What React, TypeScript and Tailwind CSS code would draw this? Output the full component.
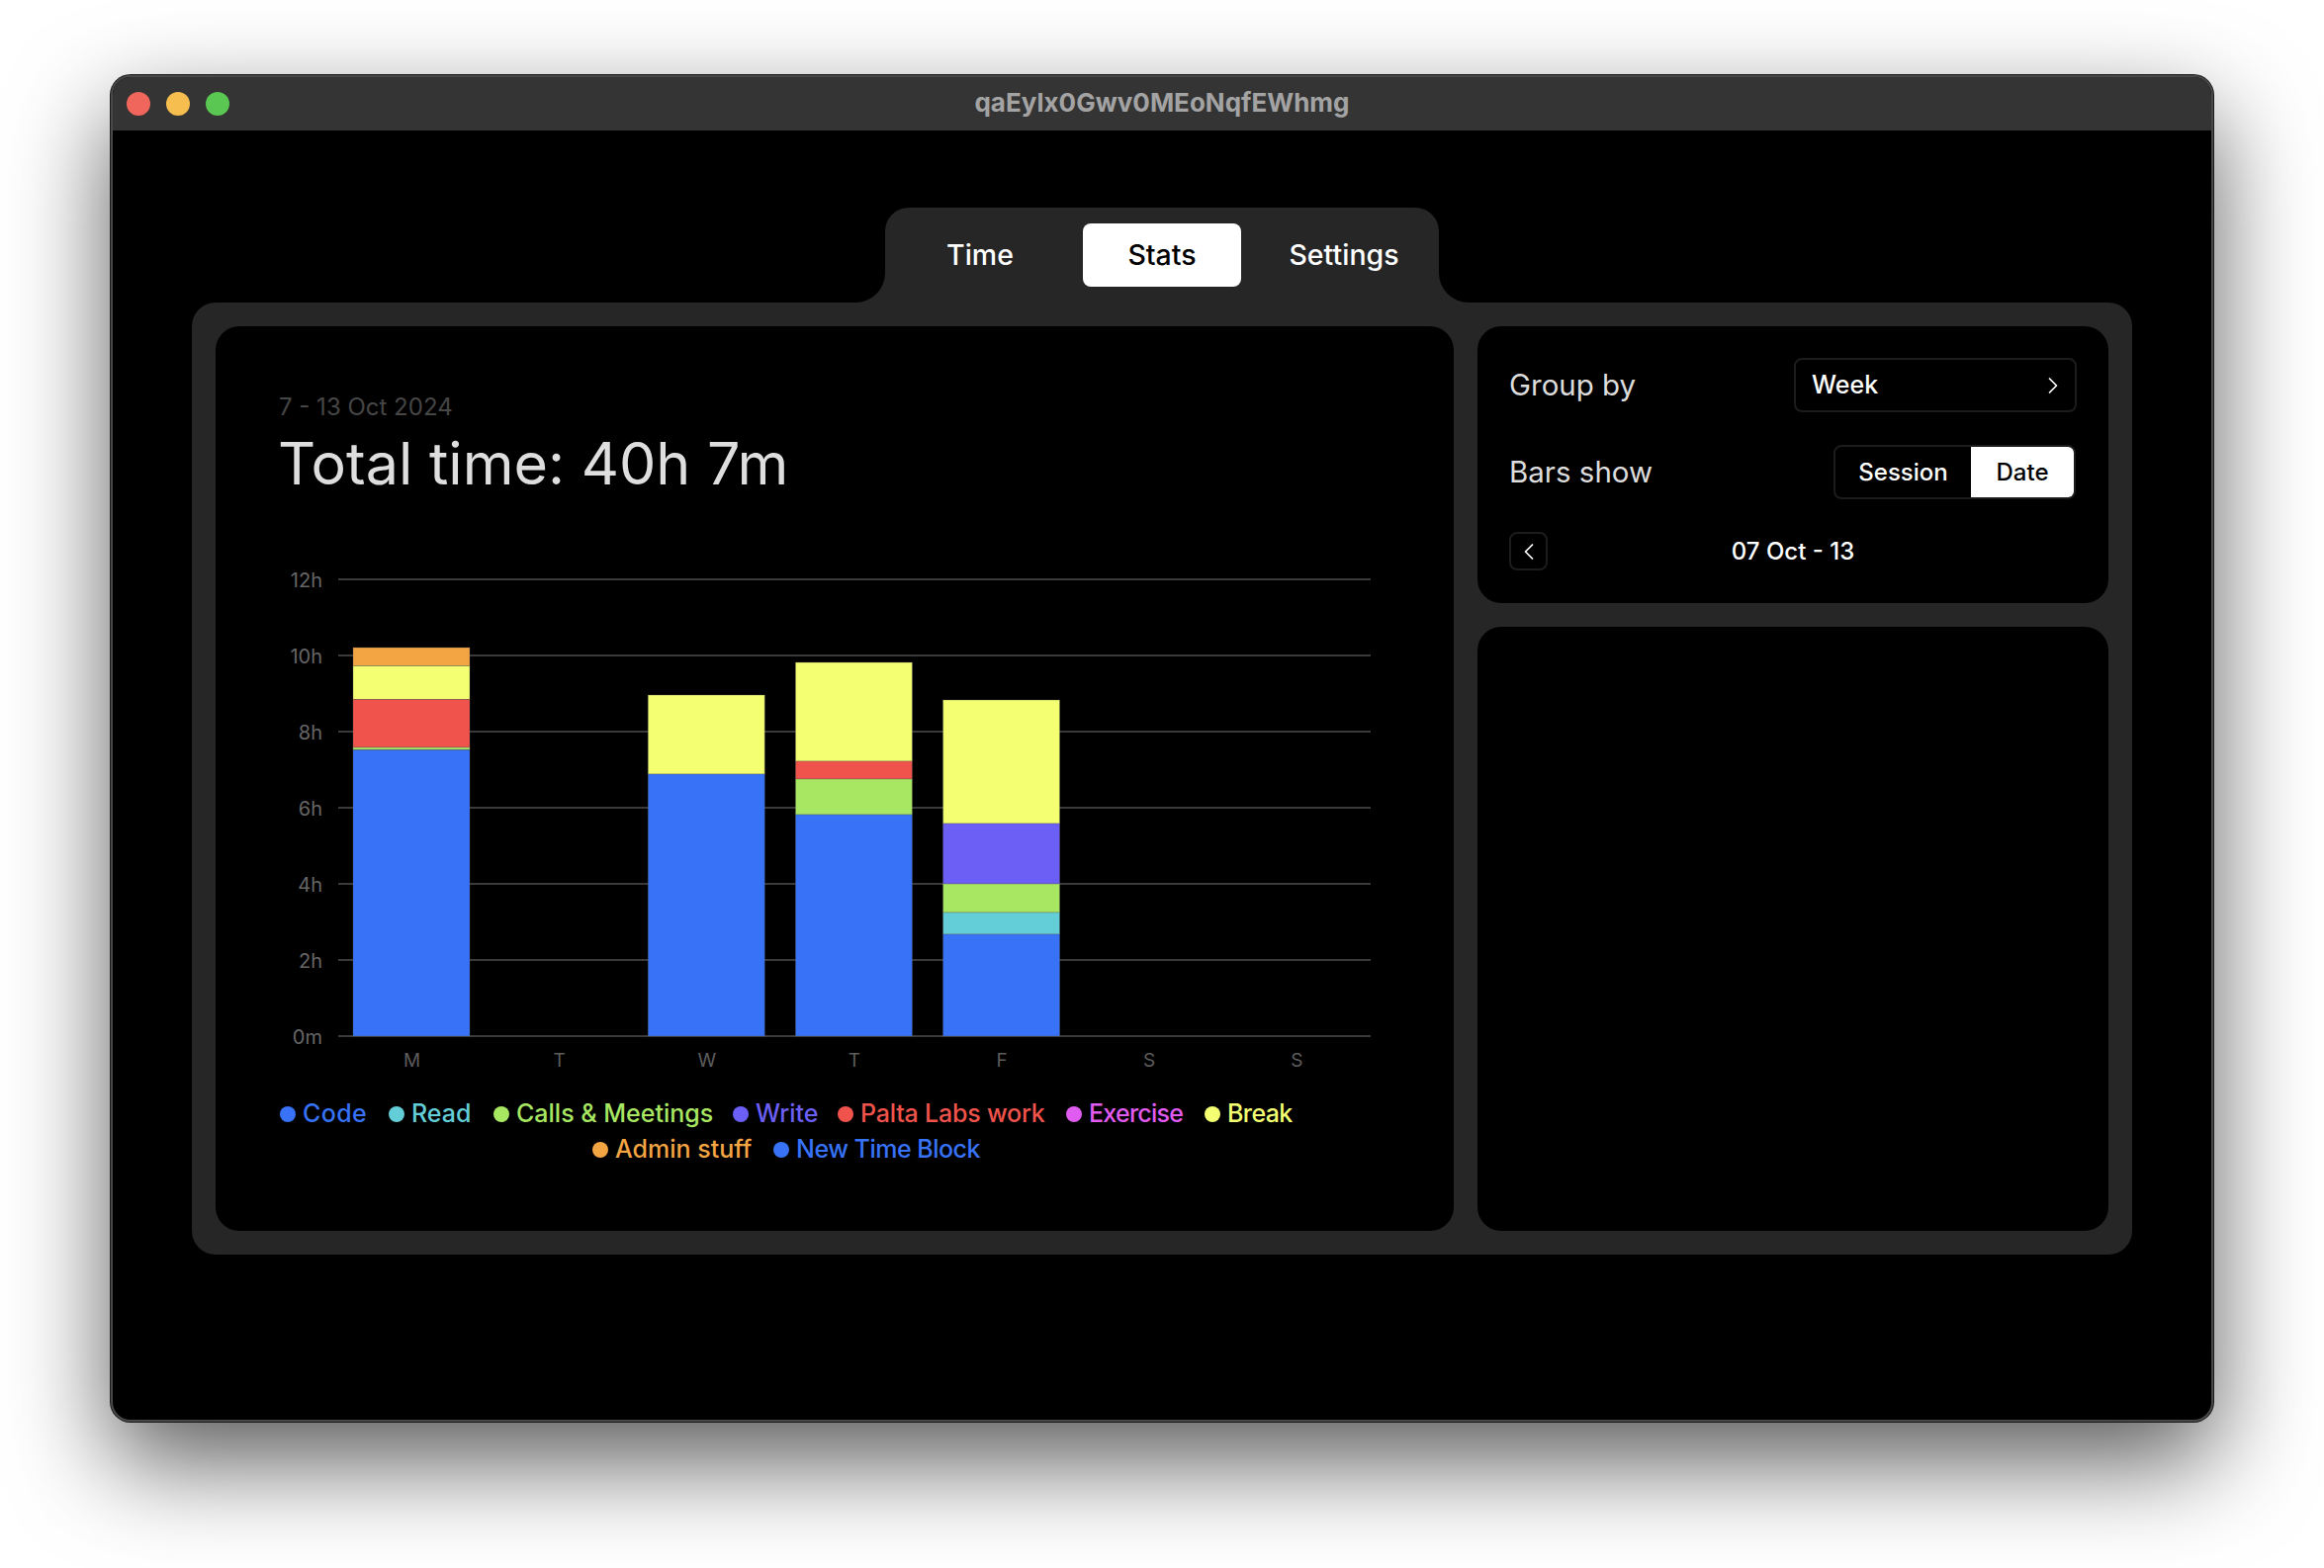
import React from "react";
import { ChevronLeft, ChevronRight } from "lucide-react";

const BLUE = "#3772f7";
const CYAN = "#63ced8";
const GREEN = "#a8e762";
const PURPLE = "#6b5ff6";
const RED = "#ef534b";
const YELLOW = "#f4ff72";
const ORANGE = "#f3a443";

const LEFT = 342;
const COL = 149.14;
const TOP = 570;
const ORIGIN = 283;

type Seg = [number, number, string];
const bars: { day: number; segs: Seg[] }[] = [
  { day: 0, segs: [[655, 673.5, ORANGE], [673.5, 707.5, YELLOW], [707.5, 756, RED], [756, 758.5, GREEN], [758.5, 1048, BLUE]] },
  { day: 2, segs: [[703, 783, YELLOW], [783, 1048, BLUE]] },
  { day: 3, segs: [[670, 770, YELLOW], [770, 788, RED], [788, 824, GREEN], [824, 1048, BLUE]] },
  { day: 4, segs: [[708, 833, YELLOW], [833, 894, PURPLE], [894, 923, GREEN], [923, 945, CYAN], [945, 1048, BLUE]] },
];

const yTicks = ["12h", "10h", "8h", "6h", "4h", "2h", "0m"];
const days = ["M", "T", "W", "T", "F", "S", "S"];

const legend = [
  { name: "Code", dot: "bg-[#3772f7]", text: "text-[#3772f7] w-[65px] tracking-[0.4px]" },
  { name: "Read", dot: "bg-[#63ced8]", text: "text-[#63ced8] w-[61px]" },
  { name: "Calls & Meetings", dot: "bg-[#a8e762]", text: "text-[#a8e762] w-[197px]" },
  { name: "Write", dot: "bg-[#6b5ff6]", text: "text-[#6b5ff6] w-[61px]" },
  { name: "Palta Labs work", dot: "bg-[#ef534b]", text: "text-[#ef534b] w-[186px] tracking-[-0.2px]" },
  { name: "Exercise", dot: "bg-[#e05bf0]", text: "text-[#e05bf0] w-[95px] tracking-[-0.75px]" },
  { name: "Break", dot: "bg-[#f4ff72]", text: "text-[#f4ff72] w-[66px] tracking-[-0.6px]" },
  { name: "Admin stuff", dot: "bg-[#f3a443]", text: "text-[#f3a443] w-[138px]" },
  { name: "New Time Block", dot: "bg-[#3772f7]", text: "text-[#3772f7] w-[186px] tracking-[-0.5px]" },
];

function Chart() {
  return (
    <svg width={1123} height={520} className="block" style={{ fontFamily: "Inter, sans-serif" }}>
      {yTicks.map((t, i) => {
        const y = 586 + i * 77 - TOP;
        return (
          <g key={t}>
            <line x1={LEFT - ORIGIN} x2={1386 - ORIGIN} y1={y} y2={y} stroke="#3a3a3a" strokeWidth={2} />
            <text x={43} y={y + 8} textAnchor="end" fontSize={20} fill="#666666">
              {t}
            </text>
          </g>
        );
      })}
      {bars.map((b) =>
        b.segs.map(([y0, y1, c], i) => (
          <rect
            key={`${b.day}-${i}`}
            x={LEFT - ORIGIN + 15 + b.day * COL}
            y={y0 - TOP}
            width={118}
            height={y1 - y0}
            fill={c}
            stroke="rgba(90,90,90,0.35)"
            strokeWidth={1}
          />
        ))
      )}
      {days.map((d, i) => (
        <text key={i} x={LEFT - ORIGIN + 74.5 + i * COL} y={509} textAnchor="middle" fontSize={19} fill="#5c5c5c">
          {d}
        </text>
      ))}
    </svg>
  );
}

function Tab({ label, active }: { label: string; active?: boolean }) {
  return (
    <div
      className={
        active
          ? "w-40 h-16 rounded-lg bg-white text-black flex items-center justify-center text-[28.5px] font-medium"
          : "w-40 h-16 rounded-lg text-white flex items-center justify-center text-[28.5px] font-medium"
      }
    >
      {label}
    </div>
  );
}

export default function App() {
  return (
    <div
      className="w-[2350px] h-[1586px] bg-white pt-[76px] pl-[112px] overflow-hidden"
      style={{ fontFamily: "Inter, sans-serif" }}
    >
      <div className="w-[2126px] h-[1362px] rounded-[20px] bg-black flex flex-col overflow-hidden border-2 border-[#484848] shadow-[0_0_0_1px_#1a1a1a,0_40px_100px_rgba(0,0,0,0.65)]">
        <div className="relative h-[54px] shrink-0 bg-[#343434] flex items-center pl-[14px] gap-[16px]">
          <div className="w-[24px] h-[24px] rounded-full bg-[#f0665c]" />
          <div className="w-[24px] h-[24px] rounded-full bg-[#f6bd4f]" />
          <div className="w-[24px] h-[24px] rounded-full bg-[#5ac752]" />
          <div className="absolute inset-0 pb-[3px] flex items-center justify-center text-[26px] font-bold text-[#a3a3a3]">
            qaEylx0Gwv0MEoNqfEWhmg
          </div>
        </div>

        <div className="flex flex-col items-center pt-[78px]">
          <div className="relative w-[560px] h-[96px] p-4 flex gap-6 bg-[#262626] rounded-t-[24px]">
            <div className="absolute left-[-30px] bottom-0 w-[30px] h-[30px] bg-[#262626]">
              <div className="w-full h-full bg-black rounded-br-[30px]" />
            </div>
            <div className="absolute right-[-30px] bottom-0 w-[30px] h-[30px] bg-[#262626]">
              <div className="w-full h-full bg-black rounded-bl-[30px]" />
            </div>
            <Tab label="Time" />
            <Tab label="Stats" active />
            <Tab label="Settings" />
          </div>

          <div className="w-[1962px] h-[963px] bg-[#262626] rounded-[24px] p-6 flex gap-6">
            <div className="w-[1252px] h-full bg-black rounded-[24px] pt-[65px] pl-[65px]">
              <div className="-ml-px text-[24px] leading-[34px] text-[#464646]">7 - 13 Oct 2024</div>
              <div className="mt-[4px] -ml-[2px] text-[59.2px] leading-[72px] text-[#dedede]">Total time: 40h 7m</div>
              <div className="mt-[65px]">
                <Chart />
              </div>
              <div className="mt-[19px] -ml-[8px] w-[1040px] flex flex-wrap justify-center gap-x-[22px]">
                {legend.map((l) => (
                  <div key={l.name} className="h-[36px] flex items-center gap-[7px]">
                    <span className={`w-[16px] h-[16px] rounded-full ${l.dot}`} />
                    <span className={`text-[25px] font-medium whitespace-nowrap ${l.text}`}>{l.name}</span>
                  </div>
                ))}
              </div>
            </div>

            <div className="flex-1 h-full flex flex-col gap-6">
              <div className="h-[280px] bg-black rounded-[24px] p-8 flex flex-col gap-[33px]">
                <div className="flex items-center justify-between">
                  <span className="text-[29.5px] text-[#dddddd]">Group by</span>
                  <div className="w-[286px] h-[55px] border-2 border-[#1c1c1c] rounded-lg flex items-center justify-between pl-[16px] pr-[8px] text-white text-[25px] font-medium">
                    Week
                    <ChevronRight size={28} strokeWidth={1.5} />
                  </div>
                </div>
                <div className="flex items-center justify-between">
                  <span className="text-[29.5px] text-[#dddddd]">Bars show</span>
                  <div className="mr-[1px] w-[245px] h-[55px] border-2 border-[#1c1c1c] rounded-lg flex overflow-hidden text-[24px] font-medium">
                    <div className="w-[137px] flex items-center justify-center text-white">Session</div>
                    <div className="flex-1 bg-white text-black flex items-center justify-center">Date</div>
                  </div>
                </div>
                <div className="grid grid-cols-[39px_1fr_39px] items-center">
                  <div className="w-[39px] h-[39px] border-2 border-[#1c1c1c] rounded-lg flex items-center justify-center text-white">
                    <ChevronLeft size={28} strokeWidth={1.5} />
                  </div>
                  <div className="text-center text-white text-[24px] font-medium">07 Oct - 13</div>
                </div>
              </div>
              <div className="flex-1 bg-black rounded-[24px]" />
            </div>
          </div>
        </div>
      </div>
    </div>
  );
}
